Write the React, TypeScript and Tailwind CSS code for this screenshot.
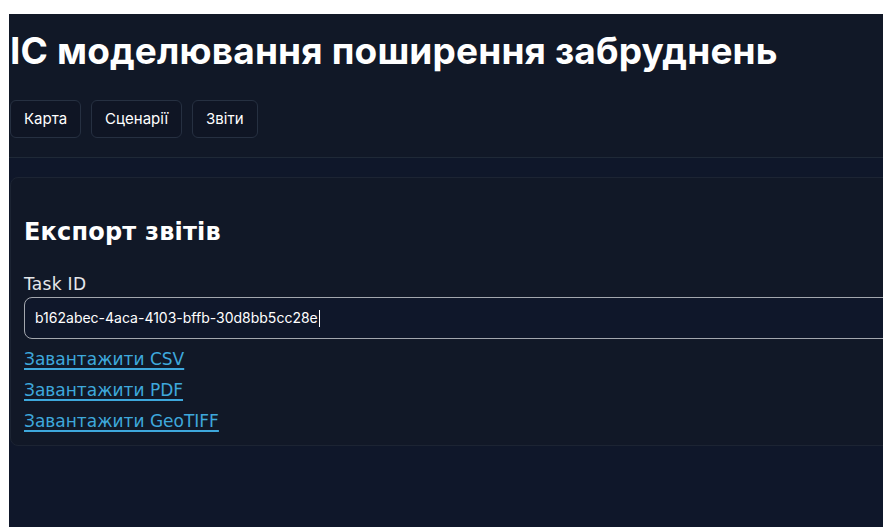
import React from "react";

const tabs = ["Карта", "Сценарії", "Звіти"];
const links = ["Завантажити CSV", "Завантажити PDF", "Завантажити GeoTIFF"];

export default function App() {
  return (
    <div className="w-[883px] h-[527px] overflow-hidden bg-white pt-[14px] pl-[9px] font-['Inter',sans-serif]">
      <div className="w-[960px] h-full bg-[#0f172a] text-[#e5e7eb]">
        <header className="bg-[#111827] border-b border-[#1f2937] pt-[17px] pb-[19px]">
          <h1 className="text-[37px] leading-[40px] font-bold text-white pl-[1px] tracking-[0.15px]">
            ІС моделювання поширення забруднень
          </h1>
          <nav className="mt-[29px] flex gap-[10px] pl-[1px]">
            {tabs.map((t) => (
              <button
                key={t}
                className="h-[38px] px-[13px] rounded-md border border-[#263041] bg-[#0f1524] text-[15px] text-white"
              >
                {t}
              </button>
            ))}
          </nav>
        </header>

        <section className="mt-[19px] ml-[1px] rounded-lg border border-[#1c2433] bg-[#111827] pl-[13px] pt-[38px] pb-[12px]">
          <h2 className="text-2xl leading-[32px] font-bold text-white font-['DejaVu_Sans',sans-serif] tracking-[0.2px]">
            Експорт звітів
          </h2>
          <label className="mt-[24px] block text-[17px] leading-[24px] text-[#e5e7eb] font-['DejaVu_Sans',sans-serif] tracking-[0.3px]">
            Task ID
          </label>
          <div className="mt-[1px] h-[42px] flex items-center rounded-lg border-[1.5px] border-[#a3a7ae] bg-[#0f172a] px-[10px] text-sm text-white">
            b162abec-4aca-4103-bffb-30d8bb5cc28e
            <span className="ml-[1px] inline-block w-px h-[17px] bg-white" />
          </div>
          <div className="mt-[8px] flex flex-col gap-[7px]">
            {links.map((l) => (
              <a
                key={l}
                href="#"
                className="self-start text-[17px] leading-[24px] text-[#3ea8dc] underline decoration-[1.5px] underline-offset-[3px] font-['DejaVu_Sans',sans-serif]"
              >
                {l}
              </a>
            ))}
          </div>
        </section>
      </div>
    </div>
  );
}
